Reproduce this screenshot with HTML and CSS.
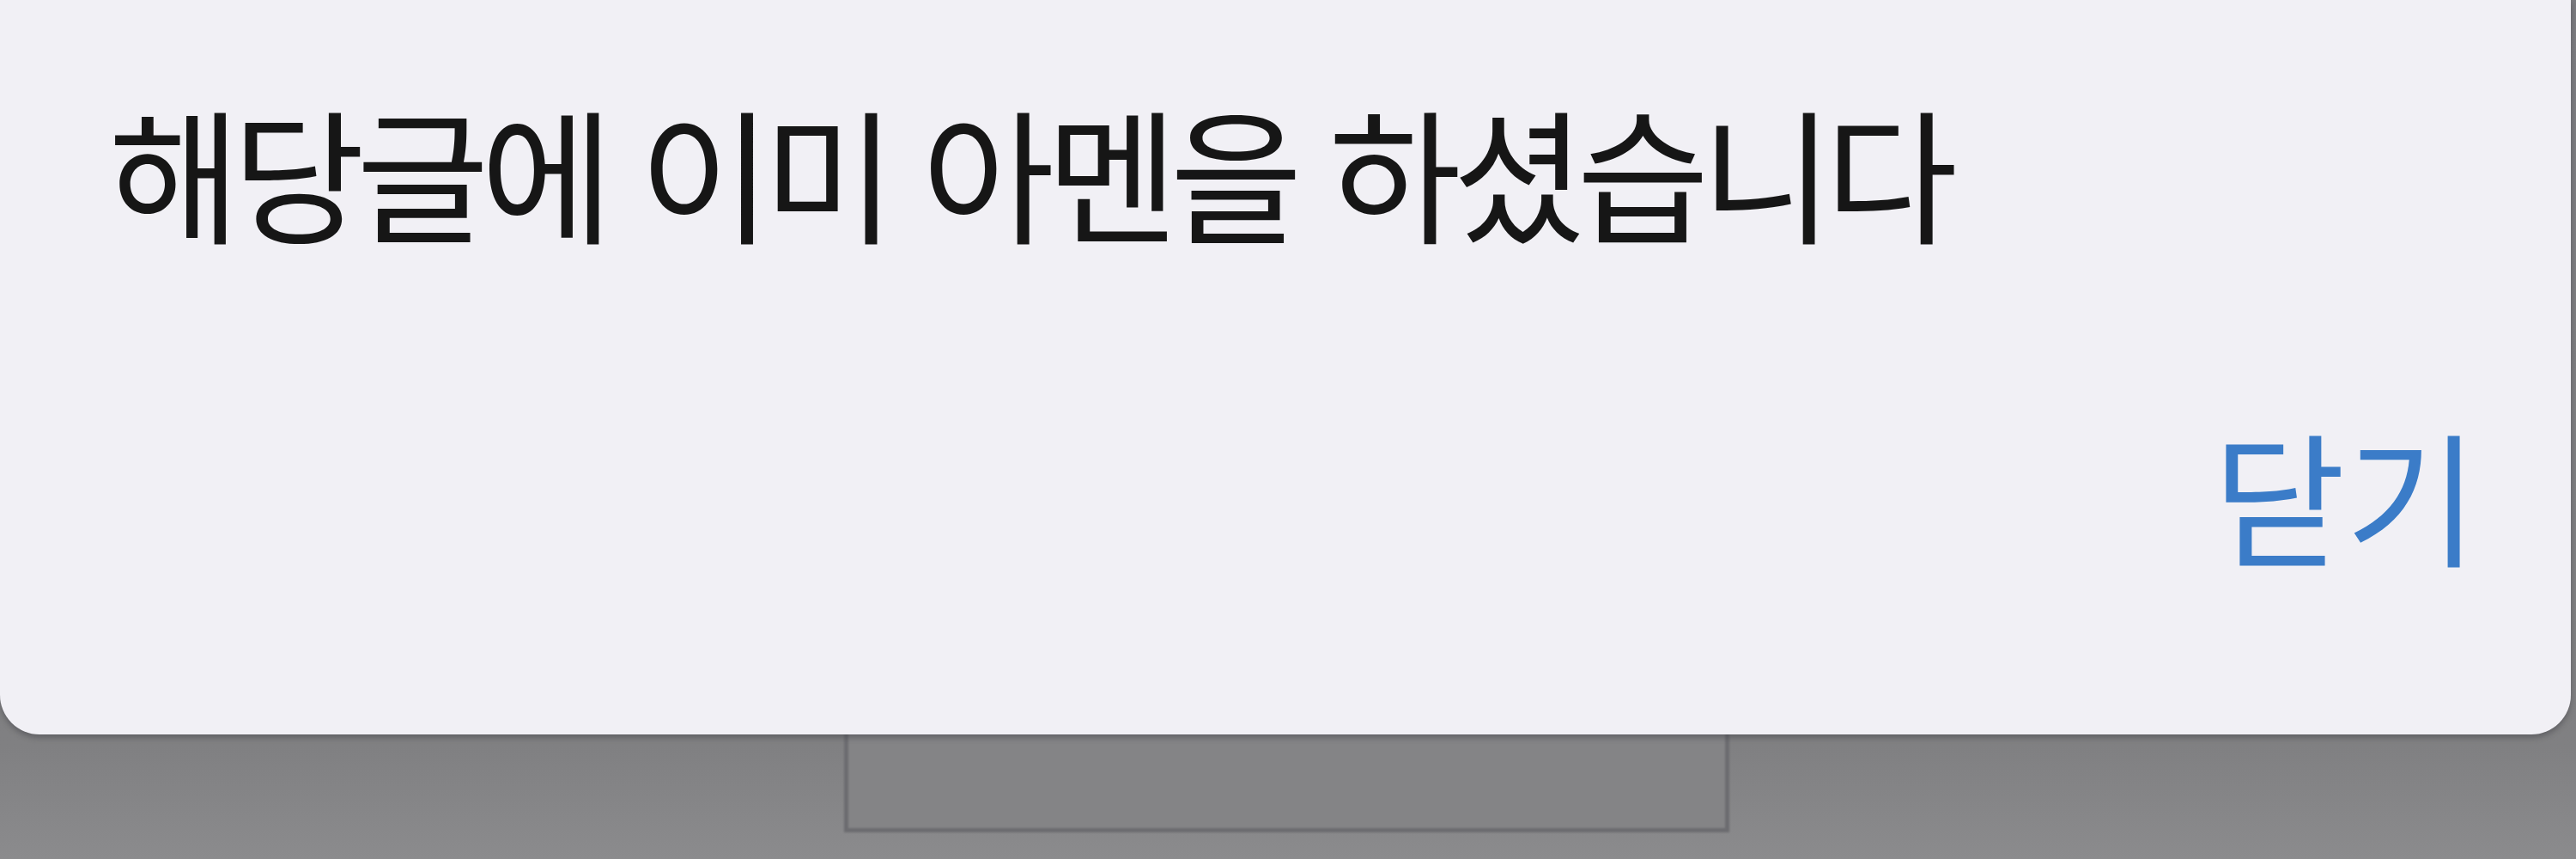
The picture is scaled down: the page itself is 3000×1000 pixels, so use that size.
FILE: index.html
```html
<!DOCTYPE html>
<html lang="ko">
<head>
<meta charset="utf-8">
<title>알림</title>
<link rel="stylesheet" href="styles.css">
</head>
<body>
<div class="screen">
  <div class="dialog">
    <p class="message">해당글에 이미 아멘을 하셨습니다</p>
    <div class="actions">
      <button class="close-btn" type="button">닫기</button>
    </div>
  </div>
  <div class="backdrop">
    <div class="behind-box"></div>
  </div>
</div>
</body>
</html>
```
FILE: styles.css
```css
html, body {
  margin: 0;
  padding: 0;
  width: 3000px;
  height: 1000px;
  overflow: hidden;
}
body {
  background: #858587;
  font-family: "Noto Sans CJK KR", "Noto Sans", sans-serif;
}
.screen {
  width: 3000px;
  height: 1000px;
  display: flex;
  flex-direction: column;
  overflow: hidden;
  background: linear-gradient(180deg, #7b7b7f 0px, #808082 870px, #8b8b8d 1000px);
}
.dialog {
  flex: none;
  width: 2994px;
  height: 855px;
  box-sizing: border-box;
  background: #f1f0f5;
  border-radius: 0 0 46px 46px;
  box-shadow: 0 4px 6px rgba(60, 60, 66, 0.45);
  display: flex;
  flex-direction: column;
  padding: 78px 108px 0 126px;
  position: relative;
  z-index: 1;
}
.message {
  margin: 0;
  font-size: 168px;
  line-height: 240px;
  letter-spacing: -10px;
  word-spacing: 3px;
  color: #161616;
  font-weight: 400;
  white-space: nowrap;
}
.actions {
  display: flex;
  justify-content: flex-end;
  margin-top: 136px;
}
.close-btn {
  font-family: inherit;
  font-size: 168px;
  line-height: 240px;
  letter-spacing: 0;
  color: #3b7cc8;
  background: none;
  border: 0;
  padding: 0;
  margin: 0;
}
.backdrop {
  flex: 1;
  display: flex;
  align-items: flex-start;
  padding-left: 983px;
}
.behind-box {
  width: 1031px;
  height: 124px;
  margin-top: -10px;
  box-sizing: border-box;
  border: 5px solid #6c6c70;
  border-top: 0;
  background: #848486;
  filter: blur(1px);
}
```
